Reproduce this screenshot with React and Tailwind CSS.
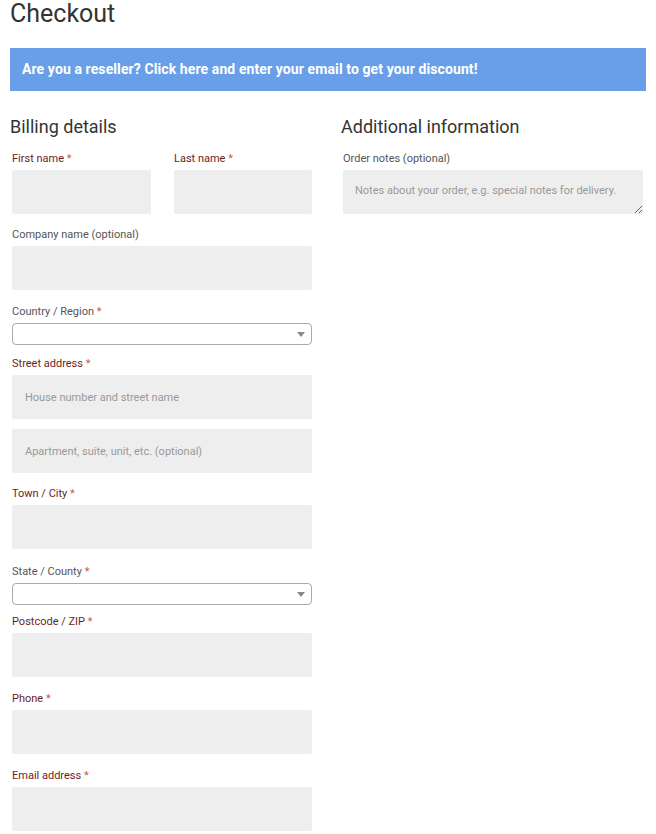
import React from "react";

const font = { fontFamily: "Roboto, 'Liberation Sans', sans-serif" };

function Label({ children, required, muted }) {
  return (
    <label
      className={`block ml-[2px] text-[11px] leading-[16px] mb-[3px] ${
        muted ? "text-[#555555]" : "text-[#6e1d1d]"
      }`}
    >
      {children}
      {required && <span className="text-[#c9603f]"> *</span>}
    </label>
  );
}

function TextInput({ placeholder }) {
  return (
    <input
      type="text"
      placeholder={placeholder}
      className="block w-[300px] h-[44px] mx-[2px] px-[13px] rounded-[2px] bg-[#eeeeee] text-[11px] text-[#333] placeholder:text-[#999999] outline-none"
    />
  );
}

function Select() {
  return (
    <div className="relative w-[300px] h-[22px] mx-[2px] rounded-[4px] border border-[#aaaaaa] bg-white">
      <span className="absolute right-[6px] top-[8px] w-0 h-0 border-l-[4px] border-r-[4px] border-t-[5px] border-l-transparent border-r-transparent border-t-[#888888]" />
    </div>
  );
}

function Field({ label, required, muted, children, className = "mb-[13px]" }) {
  return (
    <div className={className}>
      <Label required={required} muted={muted}>
        {label}
      </Label>
      {children}
    </div>
  );
}

export default function App() {
  return (
    <div className="bg-white w-[656px] min-h-[834px] px-[10px] pt-[1px] text-[#333333]" style={font}>
      <h1 className="text-[25px] leading-[25px] font-normal text-[#333333]">Checkout</h1>

      <div className="mt-[22px] h-[43px] bg-[#699fe8] flex items-center px-[12px]">
        <p className="text-white text-[14px] font-bold tracking-[0.1px]">
          Are you a reseller? Click here and enter your email to get your discount!
        </p>
      </div>

      <div className="flex gap-[25px] mt-[25px]">
        {/* Billing column */}
        <div className="w-[306px]">
          <h3 className="text-[18px] leading-[22px] text-[#333333] mb-[13px]">Billing details</h3>

          <div className="flex gap-[19px]">
            <Field label="First name" required>
              <input className="block w-[139px] h-[44px] mx-[2px] rounded-[2px] bg-[#eeeeee] outline-none" />
            </Field>
            <Field label="Last name" required>
              <input className="block w-[138px] h-[44px] mx-[2px] rounded-[2px] bg-[#eeeeee] outline-none" />
            </Field>
          </div>

          <Field label="Company name (optional)" muted className="mb-[14px]">
            <TextInput />
          </Field>

          <Field label="Country / Region" required muted className="mb-[11px]">
            <Select />
          </Field>

          <div className="mb-[13px]">
            <Label required>Street address</Label>
            <TextInput placeholder="House number and street name" />
            <div className="h-[10px]" />
            <TextInput placeholder="Apartment, suite, unit, etc. (optional)" />
          </div>

          <Field label="Town / City" required className="mb-[15px]">
            <TextInput />
          </Field>

          <Field label="State / County" required muted className="mb-[9px]">
            <Select />
          </Field>

          <Field label="Postcode / ZIP" required className="mb-[14px]">
            <TextInput />
          </Field>

          <Field label="Phone" required className="mb-[14px]">
            <TextInput />
          </Field>

          <Field label="Email address" required>
            <TextInput />
          </Field>
        </div>

        {/* Additional information column */}
        <div className="w-[305px]">
          <h3 className="text-[18px] leading-[22px] text-[#333333] mb-[13px]">Additional information</h3>
          <Field label="Order notes (optional)" muted>
            <textarea
              placeholder="Notes about your order, e.g. special notes for delivery."
              className="block w-[300px] h-[44px] mx-[2px] px-[12px] pt-[13px] pb-[11px] rounded-[2px] bg-[#eeeeee] text-[11px] leading-[16px] placeholder:text-[#999999] outline-none"
            />
          </Field>
        </div>
      </div>
    </div>
  );
}
